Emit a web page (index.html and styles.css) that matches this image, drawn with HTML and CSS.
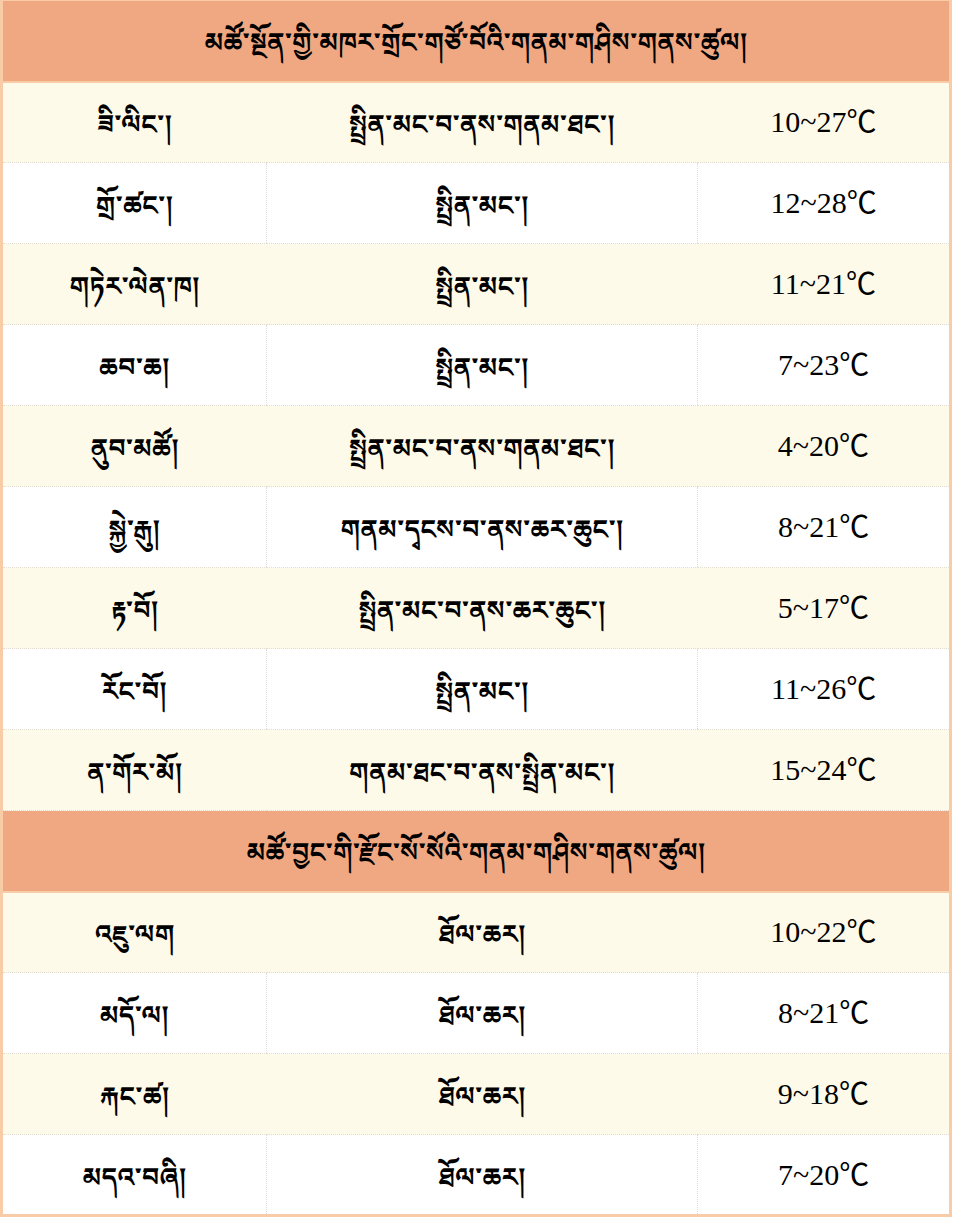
FILE: index.html
```html
<!DOCTYPE html>
<html lang="bo">
<head>
<meta charset="utf-8">
<title>གནམ་གཤིས་གནས་ཚུལ།</title>
<link rel="stylesheet" href="styles.css">
</head>
<body>
<table class="weather">
  <colgroup>
    <col class="c1"><col class="c2"><col class="c3">
  </colgroup>
  <tbody>
    <tr class="head"><th colspan="3">མཚོ་སྔོན་གྱི་མཁར་གྲོང་གཙོ་བོའི་གནམ་གཤིས་གནས་ཚུལ།</th></tr>
    <tr class="odd"><td>ཟི་ལིང་།</td><td>སྤྲིན་མང་བ་ནས་གནམ་ཐང་།</td><td class="num">10~27℃</td></tr>
    <tr class="even"><td>གྲོ་ཚང་།</td><td>སྤྲིན་མང་།</td><td class="num">12~28℃</td></tr>
    <tr class="odd"><td>གཏེར་ལེན་ཁ།</td><td>སྤྲིན་མང་།</td><td class="num">11~21℃</td></tr>
    <tr class="even"><td>ཆབ་ཆ།</td><td>སྤྲིན་མང་།</td><td class="num">7~23℃</td></tr>
    <tr class="odd"><td>ནུབ་མཚོ།</td><td>སྤྲིན་མང་བ་ནས་གནམ་ཐང་།</td><td class="num">4~20℃</td></tr>
    <tr class="even"><td>སྐྱེ་རྒུ།</td><td>གནམ་དྭངས་བ་ནས་ཆར་ཆུང་།</td><td class="num">8~21℃</td></tr>
    <tr class="odd"><td>རྟ་བོ།</td><td>སྤྲིན་མང་བ་ནས་ཆར་ཆུང་།</td><td class="num">5~17℃</td></tr>
    <tr class="even"><td>རོང་བོ།</td><td>སྤྲིན་མང་།</td><td class="num">11~26℃</td></tr>
    <tr class="odd"><td>ན་གོར་མོ།</td><td>གནམ་ཐང་བ་ནས་སྤྲིན་མང་།</td><td class="num">15~24℃</td></tr>
    <tr class="head"><th colspan="3">མཚོ་བྱང་གི་རྫོང་སོ་སོའི་གནམ་གཤིས་གནས་ཚུལ།</th></tr>
    <tr class="odd"><td>འཇུ་ལག</td><td>ཐོལ་ཆར།</td><td class="num">10~22℃</td></tr>
    <tr class="even"><td>མདོ་ལ།</td><td>ཐོལ་ཆར།</td><td class="num">8~21℃</td></tr>
    <tr class="odd"><td>རྐང་ཚ།</td><td>ཐོལ་ཆར།</td><td class="num">9~18℃</td></tr>
    <tr class="even"><td>མདའ་བཞི།</td><td>ཐོལ་ཆར།</td><td class="num">7~20℃</td></tr>
  </tbody>
</table>
</body>
</html>
```
FILE: styles.css
```css
html, body {
  margin: 0;
  padding: 0;
  background: #ffffff;
}

.weather {
  width: 952px;
  border-collapse: collapse;
  table-layout: fixed;
  border: 3px solid #f9cca8;
  border-top: 1px solid #f9cca8;
  font-family: "Noto Serif Tibetan", "Jomolhari", "Noto Sans Tibetan", "DejaVu Sans", serif;
  color: #000;
}

.c1 { width: 264px; }
.c2 { width: 430px; }
.c3 { width: 252px; }

.weather tr {
  height: 81px;
}

.weather th,
.weather td {
  padding: 20px 0 0;
  text-align: center;
  vertical-align: middle;
  font-size: 26px;
  font-weight: bold;
  line-height: 44px;
}

.head th {
  background: #f0a882;
  border-bottom: 2px solid #f9cca8;
  padding-top: 18px;
}

.odd td {
  background: #fefaea;
  border-bottom: 1px dotted #e2ddd0;
}

.even td {
  background: #ffffff;
  border-bottom: 1px dotted #e2ddd0;
}

.even td + td {
  border-left: 1px dotted #dddddd;
}

.weather td.num {
  padding-top: 0;
  font-family: "Liberation Serif", "Times New Roman", "Noto Sans CJK SC", serif;
  font-size: 30px;
  font-weight: normal;
}
```
